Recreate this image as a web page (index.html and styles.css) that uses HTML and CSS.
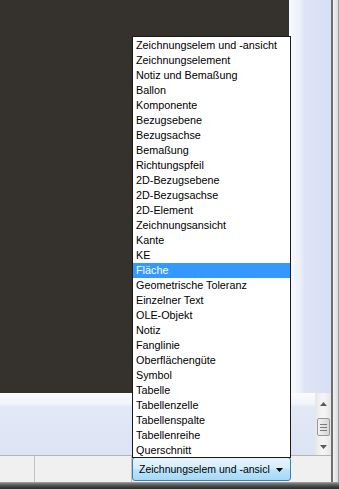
FILE: index.html
```html
<!DOCTYPE html>
<html lang="de">
<head>
  <meta charset="UTF-8">
  <title>Auswahlfilter</title>
  <link rel="stylesheet" href="styles.css">
</head>
<body>
  <div class="window">
    <div class="body-row">
      <div class="content">
        <div class="top">
          <div class="canvas"></div>
          <div class="side"></div>
        </div>
        <div class="panel">
          <div class="panel-fill"></div>
          <div class="scrollbar">
            <svg class="arrow up" width="7" height="4" viewBox="0 0 7 4"><path d="M0 4 L3.5 0 L7 4 Z" fill="#5a5a5a"/></svg>
            <div class="thumb">
              <span></span><span></span><span></span>
            </div>
            <svg class="arrow down" width="7" height="4" viewBox="0 0 7 4"><path d="M0 0 L7 0 L3.5 4 Z" fill="#5a5a5a"/></svg>
          </div>
        </div>
        <div class="status">
          <div class="cell first"></div>
          <div class="cell second"></div>
          <div class="filter-btn">
            <span class="btn-text">Zeichnungselem und -ansicl</span>
            <svg class="btn-arrow" width="7" height="4" viewBox="0 0 7 4"><path d="M0 0 L7 0 L3.5 4 Z" fill="#000"/></svg>
          </div>
          <div class="cell last"></div>
        </div>
      </div>
      <div class="frame-right"></div>
    </div>
    <div class="frame-bottom"></div>

    <!-- open dropdown of the filter button -->
    <ul class="dropdown">
      <li>Zeichnungselem und -ansicht</li>
      <li>Zeichnungselement</li>
      <li>Notiz und Bemaßung</li>
      <li>Ballon</li>
      <li>Komponente</li>
      <li>Bezugsebene</li>
      <li>Bezugsachse</li>
      <li>Bemaßung</li>
      <li>Richtungspfeil</li>
      <li>2D-Bezugsebene</li>
      <li>2D-Bezugsachse</li>
      <li>2D-Element</li>
      <li>Zeichnungsansicht</li>
      <li>Kante</li>
      <li>KE</li>
      <li class="selected">Fläche</li>
      <li>Geometrische Toleranz</li>
      <li>Einzelner Text</li>
      <li>OLE-Objekt</li>
      <li>Notiz</li>
      <li>Fanglinie</li>
      <li>Oberflächengüte</li>
      <li>Symbol</li>
      <li>Tabelle</li>
      <li>Tabellenzelle</li>
      <li>Tabellenspalte</li>
      <li>Tabellenreihe</li>
      <li>Querschnitt</li>
    </ul>
  </div>
</body>
</html>
```

FILE: styles.css
```css
html, body {
  margin: 0;
  padding: 0;
  width: 339px;
  height: 489px;
  overflow: hidden;
  font-family: 'Liberation Sans', Arial, sans-serif;
  font-size: 10.8px;
}
.window {
  position: relative;
  width: 339px;
  height: 489px;
  display: flex;
  flex-direction: column;
}
.body-row {
  display: flex;
  height: 482px;
}
.content {
  width: 331px;
  display: flex;
  flex-direction: column;
}
.top {
  display: flex;
  height: 393px;
}
.canvas {
  width: 289px;
  background: #35322e;
}
.side {
  flex: 1;
  background: linear-gradient(to right, #f7f9fe 0, #eef2fb 10px, #dee4f5 16px, #d8dff3 100%);
}
.panel {
  display: flex;
  height: 62px;
}
.panel-fill {
  flex: 1;
  background: linear-gradient(#fbfcfe 0, #f0f3fb 11px, #e2e8f6 14px, #dce3f4 100%);
}
.scrollbar {
  width: 16px;
  background: linear-gradient(to right, #e6e6e6, #f4f4f4 40%, #f4f4f4 60%, #e6e6e6);
  display: flex;
  flex-direction: column;
  align-items: center;
}
.arrow.up { margin-top: 9px; }
.arrow.down { margin-top: 9px; }
.thumb {
  margin-top: 12px;
  width: 11px;
  height: 16px;
  border: 1px solid #979797;
  border-radius: 2px;
  background: linear-gradient(to right, #f2f2f2, #e4e4e4 50%, #d6d6d6);
  display: flex;
  flex-direction: column;
  align-items: center;
  justify-content: center;
  gap: 2px;
}
.thumb span {
  width: 7px;
  height: 1px;
  background: #7a7a7a;
}
.status {
  display: flex;
  height: 26px;
  border-top: 1px solid #b4b4b4;
  background: #f0f0f0;
}
.cell {
  height: 100%;
}
.cell.first {
  width: 34px;
  border-right: 1px solid #c2c2c2;
}
.cell.second {
  width: 96px;
  border-right: 1px solid #c2c2c2;
}
.cell.last {
  flex: 1;
}
.filter-btn {
  box-sizing: border-box;
  width: 159px;
  height: 24px;
  margin-top: 1px;
  border: 1px solid #3c7fb1;
  border-radius: 3px;
  background: linear-gradient(#e5f4fc 0, #d4edfb 50%, #bde5fc 50%, #a6d8f4 100%);
  display: flex;
  align-items: center;
  padding-left: 6px;
  padding-right: 7px;
}
.btn-text {
  flex: 1;
  white-space: nowrap;
  font-size: 10.5px;
  color: #000;
}
.btn-arrow {
  margin-top: 2px;
}
.frame-right {
  flex: 1;
  border-left: 2px solid #6e6e6e;
  background: linear-gradient(to right, #f2f2f2, #dcdcdc);
  border-right: 1px solid #9a9a9a;
}
.frame-bottom {
  height: 7px;
  background: linear-gradient(#a8a8a8 0, #6c6c6c 2px, #3c3c3c 5px, #2e2e2e 100%);
}
.dropdown {
  position: absolute;
  left: 132px;
  top: 36px;
  width: 157px;
  height: 419px;
  margin: 0;
  padding: 1px 0 0 0;
  list-style: none;
  background: #fff;
  border: 1px solid #1a1a1a;
  overflow: hidden;
}
.dropdown li {
  height: 15px;
  line-height: 15px;
  padding-left: 3px;
  white-space: nowrap;
  color: #000;
}
.dropdown li.selected {
  background: #3399ff;
  color: #fff;
}
```
